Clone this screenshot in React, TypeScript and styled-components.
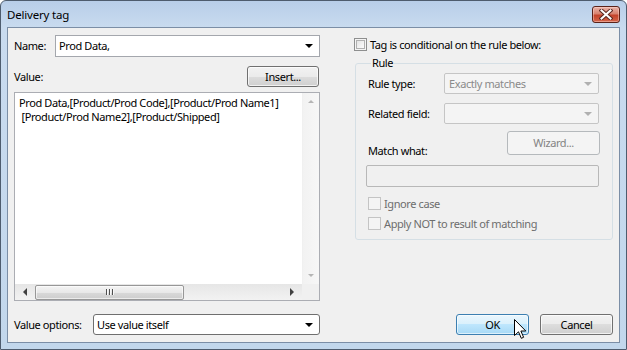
import React from "react";
import styled, { createGlobalStyle, css } from "styled-components";

const Global = createGlobalStyle`
  html, body { margin: 0; padding: 0; background: #ffffff; }
  body {
    font-family: "Noto Sans", "Open Sans", sans-serif;
    font-size: 11px;
    letter-spacing: -0.4px;
    color: #000;
  }
  * { box-sizing: border-box; }
`;

const Window = styled.div`
  position: relative;
  width: 627px;
  height: 350px;
  border: 1px solid #4e5c6e;
  border-radius: 6px 6px 0 0;
  background: linear-gradient(180deg, #b8cee9 0px, #c9dbef 27px, #c2d7ec 100%);
  display: flex;
  flex-direction: column;
  overflow: hidden;
`;

const TitleBar = styled.div`
  height: 26px;
  flex: none;
  display: flex;
  align-items: center;
  justify-content: space-between;
  padding: 0 6px 0 6px;
`;

const Title = styled.span`
  font-size: 11.5px;
  letter-spacing: -0.2px;
  line-height: 16px;
  color: #000;
  margin-top: 1px;
`;

const CloseButton = styled.div`
  width: 28px;
  height: 17px;
  margin-top: 1px;
  border: 1px solid #5a2219;
  border-radius: 3px;
  background: linear-gradient(180deg, #e9b2a8 0%, #d8826f 45%, #c3432b 55%, #d5654a 100%);
  box-shadow: inset 0 0 0 1px rgba(255, 220, 210, 0.45);
  display: flex;
  align-items: center;
  justify-content: center;
`;

const Client = styled.div`
  flex: 1;
  margin: 0 6px 6px 6px;
  border: 1px solid #7b8ea6;
  background: #f0f0f0;
  display: grid;
  grid-template-columns: 306px 259px;
  column-gap: 34px;
  padding: 0 6px;
`;

const Column = styled.div`
  display: flex;
  flex-direction: column;
  padding-top: ${(p: { $top: number }) => p.$top}px;
  padding-bottom: 7px;
`;

const Row = styled.div<{ $mt?: number; $h?: number; $justify?: string }>`
  display: flex;
  align-items: center;
  justify-content: ${(p) => p.$justify || "flex-start"};
  margin-top: ${(p) => p.$mt || 0}px;
  height: ${(p) => (p.$h ? `${p.$h}px` : "auto")};
  flex: none;
`;

const Label = styled.span<{ $w?: number; $disabled?: boolean }>`
  width: ${(p) => (p.$w ? `${p.$w}px` : "auto")};
  flex: none;
  line-height: 16px;
  white-space: nowrap;
  color: ${(p) => (p.$disabled ? "#6d6d6d" : "#000")};
`;

const ComboBase = css`
  position: relative;
  display: flex;
  align-items: center;
  line-height: 16px;
  white-space: nowrap;
`;

const EditCombo = styled.div<{ $w: number }>`
  ${ComboBase};
  width: ${(p) => p.$w}px;
  height: 22px;
  background: #fff;
  border: 1px solid #a4a7ad;
  padding-left: 3px;
`;

const ListCombo = styled.div<{ $w: number }>`
  ${ComboBase};
  width: ${(p) => p.$w}px;
  height: 21px;
  background: #fff;
  border: 1px solid #6f6f6f;
  border-radius: 3px;
  padding-left: 3px;
`;

const DisabledCombo = styled.div`
  ${ComboBase};
  width: 155px;
  height: 21px;
  background: #f4f4f4;
  border: 1px solid #c5c5c5;
  border-radius: 2px;
  padding-left: 4px;
  color: #8a8a8a;
`;

const Arrow = styled.span<{ $color: string; $right: number }>`
  position: absolute;
  right: ${(p) => p.$right}px;
  top: 50%;
  margin-top: -2px;
  width: 0;
  height: 0;
  border-left: 4px solid transparent;
  border-right: 4px solid transparent;
  border-top: 4px solid ${(p) => p.$color};
`;

const Button = styled.div<{ $w: number; $h: number; $variant?: "normal" | "hot" | "disabled" }>`
  width: ${(p) => p.$w}px;
  height: ${(p) => p.$h}px;
  flex: none;
  display: flex;
  align-items: center;
  justify-content: center;
  border-radius: 3px;
  line-height: 16px;
  ${(p) =>
    p.$variant === "disabled"
      ? css`
          border: 1px solid #b5b9bc;
          background: #f4f4f4;
          color: #838383;
        `
      : p.$variant === "hot"
      ? css`
          border: 1px solid #3c7fb1;
          background: linear-gradient(180deg, #eaf6fd 0%, #d9f0fc 50%, #bee6fd 50%, #a7d9f5 100%);
          box-shadow: inset 0 0 0 1px rgba(255, 255, 255, 0.6);
          color: #000;
        `
      : css`
          border: 1px solid #707070;
          background: linear-gradient(180deg, #f2f2f2 0%, #ebebeb 50%, #dddddd 50%, #cfcfcf 100%);
          box-shadow: inset 0 0 0 1px rgba(255, 255, 255, 0.7);
          color: #000;
        `}
`;

const TextArea = styled.div`
  margin-top: 5px;
  width: 306px;
  height: 209px;
  flex: none;
  border: 1px solid #abadb3;
  background: #fff;
  display: grid;
  grid-template-columns: 1fr 17px;
  grid-template-rows: 1fr 16px;
`;

const TextContent = styled.div`
  padding: 3px 0 0 4px;
  line-height: 14px;
  white-space: pre;
  overflow: hidden;
`;

const VScroll = styled.div`
  background: linear-gradient(90deg, #f2f2f2, #f7f7f7);
  border-left: 1px solid #f0f0f0;
  display: flex;
  flex-direction: column;
  justify-content: space-between;
  align-items: center;
  padding: 7px 0 7px 0;
`;

const HScroll = styled.div`
  background: linear-gradient(180deg, #e6e6e6, #f2f2f2);
  display: flex;
  align-items: center;
`;

const Corner = styled.div`
  background: #f0f0f0;
`;

const Spacer = styled.span<{ $w?: number }>`
  flex: ${(p) => (p.$w ? "none" : "1")};
  width: ${(p) => (p.$w ? `${p.$w}px` : "auto")};
`;

const Tri = styled.span<{ $dir: "up" | "down" | "left" | "right"; $color: string }>`
  width: 0;
  height: 0;
  flex: none;
  ${(p) =>
    p.$dir === "up"
      ? css`
          border-left: 3px solid transparent;
          border-right: 3px solid transparent;
          border-bottom: 3px solid ${p.$color};
        `
      : p.$dir === "down"
      ? css`
          border-left: 3px solid transparent;
          border-right: 3px solid transparent;
          border-top: 3px solid ${p.$color};
        `
      : p.$dir === "left"
      ? css`
          border-top: 4px solid transparent;
          border-bottom: 4px solid transparent;
          border-right: 4px solid ${p.$color};
        `
      : css`
          border-top: 4px solid transparent;
          border-bottom: 4px solid transparent;
          border-left: 4px solid ${p.$color};
        `}
`;

const Thumb = styled.div`
  margin-left: 8px;
  width: 149px;
  height: 15px;
  border: 1px solid #979797;
  border-radius: 2px;
  background: linear-gradient(180deg, #f4f4f4 0%, #e8e8e8 50%, #d9d9d9 51%, #cdcdcd 100%);
  box-shadow: inset 0 0 0 1px rgba(255, 255, 255, 0.6);
  display: flex;
  align-items: center;
  justify-content: center;
  gap: 2px;
`;

const Grip = styled.span`
  width: 1px;
  height: 6px;
  background: #4f4f4f;
  box-shadow: 1px 0 0 #f8f8f8;
`;

const CheckRow = styled.label<{ $mt: number; $ml?: number }>`
  display: flex;
  align-items: center;
  gap: 3px;
  margin-top: ${(p) => p.$mt}px;
  margin-left: ${(p) => p.$ml || 0}px;
  height: 13px;
  flex: none;
`;

const Box = styled.span<{ $disabled?: boolean }>`
  width: 13px;
  height: 13px;
  flex: none;
  ${(p) =>
    p.$disabled
      ? css`
          border: 1px solid #c4c4c4;
          background: #f4f4f4;
        `
      : css`
          border: 1px solid #8e8f8f;
          background: linear-gradient(135deg, #dcdcdc 0%, #f4f4f4 60%, #ffffff 100%);
          box-shadow: inset 0 0 0 1px #f4f4f4, inset 0 0 0 2px #b0b0b0;
        `}
`;

const Group = styled.fieldset`
  margin: 4px 0 0 1px;
  padding: 0 13px 9px 10px;
  width: 258px;
  border: 1px solid #d5dfe5;
  border-radius: 3px;
  min-width: 0;
  display: flex;
  flex-direction: column;
`;

const Legend = styled.legend`
  padding: 0 1px;
  margin-left: 5px;
  line-height: 16px;
`;

const FieldRow = styled.div<{ $mt: number }>`
  display: grid;
  grid-template-columns: 78px 155px;
  align-items: center;
  margin-top: ${(p) => p.$mt}px;
`;

const FieldLabel = styled.span`
  padding-left: 2px;
  line-height: 16px;
`;

const WizardRow = styled.div`
  display: flex;
  justify-content: space-between;
  align-items: flex-end;
  margin-top: 7px;
  height: 24px;
`;

const MatchLabel = styled.span`
  padding-left: 2px;
  line-height: 16px;
  margin-bottom: -4px;
`;

const DisabledText = styled.div`
  margin-top: 10px;
  width: 233px;
  height: 22px;
  border: 1px solid #b8b8b8;
  border-radius: 2px;
  background: #f0f0f0;
`;

const Cursor = styled.svg`
  position: absolute;
  left: 513px;
  top: 318px;
`;

export default function App() {
  return (
    <>
      <Global />
      <Window>
        <TitleBar>
          <Title>Delivery tag</Title>
          <CloseButton>
            <svg width="14" height="11" viewBox="0 0 14 11">
              <path d="M2.5 1.5 L11.5 9.5 M11.5 1.5 L2.5 9.5" stroke="#5b2a22" strokeWidth="4" strokeLinecap="square" />
              <path d="M2.5 1.5 L11.5 9.5 M11.5 1.5 L2.5 9.5" stroke="#ffffff" strokeWidth="2" strokeLinecap="square" />
            </svg>
          </CloseButton>
        </TitleBar>
        <Client>
          <Column $top={7}>
            <Row $h={22}>
              <Label $w={41}>Name:</Label>
              <EditCombo $w={265}>
                Prod Data,
                <Arrow $color="#000" $right={6} />
              </EditCombo>
            </Row>
            <Row $mt={9} $h={21} $justify="space-between">
              <Label>Value:</Label>
              <Button $w={72} $h={21} style={{ marginRight: 1 }}>
                Insert...
              </Button>
            </Row>
            <TextArea>
              <TextContent>
                {"Prod Data,[Product/Prod Code],[Product/Prod Name1]\n [Product/Prod Name2],[Product/Shipped]"}
              </TextContent>
              <VScroll>
                <Tri $dir="up" $color="#b5b5b5" />
                <Tri $dir="down" $color="#b5b5b5" />
              </VScroll>
              <HScroll>
                <Spacer $w={8} />
                <Tri $dir="left" $color="#404040" />
                <Thumb>
                  <Grip />
                  <Grip />
                  <Grip />
                </Thumb>
                <Spacer />
                <Tri $dir="right" $color="#404040" />
                <Spacer $w={8} />
              </HScroll>
              <Corner />
            </TextArea>
            <Row $h={21} style={{ marginTop: "auto" }}>
              <Label $w={79}>Value options:</Label>
              <ListCombo $w={227}>
                Use value itself
                <Arrow $color="#000" $right={6} />
              </ListCombo>
            </Row>
          </Column>
          <Column $top={10}>
            <CheckRow $mt={0}>
              <Box />
              <Label>Tag is conditional on the rule below:</Label>
            </CheckRow>
            <Group>
              <Legend>Rule</Legend>
              <FieldRow $mt={2}>
                <FieldLabel>Rule type:</FieldLabel>
                <DisabledCombo>
                  Exactly matches
                  <Arrow $color="#b0b0b0" $right={6} />
                </DisabledCombo>
              </FieldRow>
              <FieldRow $mt={9}>
                <FieldLabel>Related field:</FieldLabel>
                <DisabledCombo>
                  <Arrow $color="#b0b0b0" $right={6} />
                </DisabledCombo>
              </FieldRow>
              <WizardRow>
                <MatchLabel>Match what:</MatchLabel>
                <Button $w={93} $h={24} $variant="disabled" style={{ alignSelf: "flex-start", marginRight: -1 }}>
                  Wizard...
                </Button>
              </WizardRow>
              <DisabledText />
              <CheckRow $mt={10} $ml={2}>
                <Box $disabled />
                <Label $disabled>Ignore case</Label>
              </CheckRow>
              <CheckRow $mt={7} $ml={2}>
                <Box $disabled />
                <Label $disabled>Apply NOT to result of matching</Label>
              </CheckRow>
            </Group>
            <Row $h={21} $justify="flex-end" style={{ marginTop: "auto", gap: 11 }}>
              <Button $w={73} $h={21} $variant="hot">
                OK
              </Button>
              <Button $w={73} $h={21}>
                Cancel
              </Button>
            </Row>
          </Column>
        </Client>
        <Cursor width="13" height="21" viewBox="0 0 13 21">
          <path
            d="M0.5 0.5 L0.5 16.5 L4.5 12.8 L7.3 19.3 L9.6 18.3 L6.9 12 L11.8 12 Z"
            fill="#ffffff"
            stroke="#000000"
            strokeWidth="1"
            strokeLinejoin="miter"
          />
        </Cursor>
      </Window>
    </>
  );
}
